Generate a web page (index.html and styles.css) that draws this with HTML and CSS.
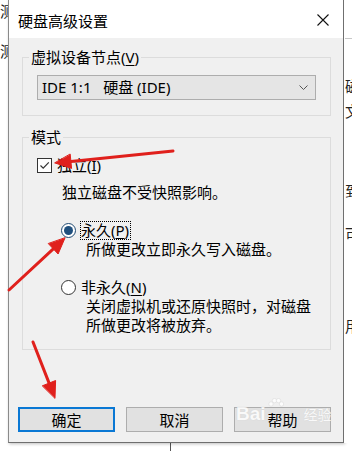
FILE: index.html
```html
<!DOCTYPE html>
<html lang="zh-CN">
<head>
<meta charset="utf-8">
<title>硬盘高级设置</title>
<link rel="stylesheet" href="styles.css">
</head>
<body>
<div class="screen">
  <div class="edge edge-left">
    <div class="bg-char bl1">测</div>
    <div class="bg-char bl2">测</div>
  </div>

  <div class="dialog">
    <div class="titlebar">
      <span class="title">硬盘高级设置</span>
      <svg class="close" width="12" height="12" viewBox="0 0 12 12"><path d="M0.5 0.5 L11.5 11.5 M11.5 0.5 L0.5 11.5" stroke="#111" stroke-width="1.1" fill="none"/></svg>
    </div>

    <div class="content">
      <fieldset class="group group-node">
        <legend>虚拟设备节点(<u>V</u>)</legend>
        <div class="group-inner node-inner">
          <div class="select">
            <span class="select-text">IDE 1:1&nbsp;&nbsp;&nbsp;硬盘 (IDE)</span>
            <svg class="chevron" width="9" height="5" viewBox="0 0 9 5"><path d="M0.5 0.5 L4.5 4.5 L8.5 0.5" stroke="#555" stroke-width="1" fill="none"/></svg>
          </div>
        </div>
      </fieldset>

      <fieldset class="group group-mode">
        <legend>模式</legend>
        <div class="group-inner mode-inner">
          <div class="row check-row">
            <span class="checkbox"><svg width="13" height="13" viewBox="0 0 13 13"><path d="M2.5 6.5 L5.2 9.2 L10.8 3.4" stroke="#333" stroke-width="1.2" fill="none"/></svg></span>
            <span class="opt-label">独立(<u>I</u>)</span>
          </div>
          <div class="desc desc-check">独立磁盘不受快照影响。</div>

          <div class="row radio-row radio-first">
            <span class="radio checked"><span class="dot"></span></span>
            <span class="opt-label radio-label focused">永久(<u>P</u>)</span>
          </div>
          <div class="desc desc-radio">所做更改立即永久写入磁盘。</div>

          <div class="row radio-row radio-second">
            <span class="radio"></span>
            <span class="opt-label radio-label">非永久(<u>N</u>)</span>
          </div>
          <div class="desc desc-radio">关闭虚拟机或还原快照时，对磁盘<br>所做更改将被放弃。</div>
        </div>
      </fieldset>

      <div class="buttons">
        <button class="btn btn-default">确定</button>
        <button class="btn">取消</button>
        <button class="btn btn-help">帮助</button>
      </div>
    </div>
  </div>

  <div class="edge edge-right">
    <div class="rule-line"></div>
    <div class="bg-char br1">磁</div>
    <div class="bg-char br2">文</div>
    <div class="bg-char br3">到</div>
    <div class="bg-char br4">可</div>
    <div class="bg-char br5">用</div>
  </div>
</div>
<div class="below"><div class="below-line"></div></div>

<div class="watermark">
  <span class="wm-bai">Bai</span>
  <svg class="wm-paw" width="16" height="14" viewBox="0 0 16 14"><g fill="#fff" stroke="#d8d8d8" stroke-width="0.6"><circle cx="3" cy="6" r="2.2"/><circle cx="6.5" cy="2.6" r="2.2"/><circle cx="10.5" cy="2.6" r="2.2"/><circle cx="13.5" cy="6" r="2.2"/></g></svg>
  <span class="wm-jy">经验</span>
</div>

<svg class="arrows" width="352" height="451" viewBox="0 0 352 451">
  <g fill="#e0201c" stroke="#e0201c" stroke-linecap="round">
    <line x1="173" y1="151" x2="70.9" y2="161.4" stroke-width="3"/>
    <polygon points="55,163 71.6,168.4 70.2,154.4" stroke-width="1"/>
    <line x1="9" y1="290" x2="53.3" y2="248.9" stroke-width="3"/>
    <polygon points="65,238 58.1,254 48.5,243.8" stroke-width="1"/>
    <line x1="33" y1="342" x2="49.1" y2="383.1" stroke-width="3"/>
    <polygon points="55,398 55.6,380.5 42.6,385.7" stroke-width="1"/>
  </g>
</svg>
</body>
</html>
```

FILE: styles.css
```css
* { box-sizing: border-box; }

html, body {
  margin: 0;
  padding: 0;
  background: #ffffff;
}

body {
  width: 352px;
  height: 451px;
  overflow: hidden;
  position: relative;
  font-family: "Noto Sans", "Noto Sans CJK SC", sans-serif;
  font-size: 15px;
  color: #000;
}

.screen {
  display: flex;
  height: 443px;
}

.edge {
  overflow: hidden;
  background: #fff;
  flex: none;
}

.edge-left { width: 8px; }
.edge-right { width: 8px; padding-left: 1px; }

.bg-char {
  line-height: 19px;
  height: 19px;
  white-space: nowrap;
  color: #222;
}

.bl1 { margin-top: 2px; }
.bl2 { margin-top: 21px; }

.rule-line {
  height: 1px;
  background: #c8c8c8;
  margin-top: 38px;
}

.br1 { margin-top: 38px; }
.br2 { margin-top: 6px; }
.br3 { margin-top: 61px; }
.br4 { margin-top: 24px; }
.br5 { margin-top: 73px; }

.dialog {
  width: 336px;
  flex: none;
  border-left: 1px solid #8a8a8a;
  border-right: 1px solid #6f6f6f;
  border-bottom: 1px solid #6f6f6f;
  background: #f0f0f0;
  display: flex;
  flex-direction: column;
  box-shadow: 1px 1px 3px rgba(0, 0, 0, 0.25);
}

.titlebar {
  height: 38px;
  background: #ffffff;
  display: flex;
  align-items: center;
  justify-content: space-between;
  padding: 2px 14px 0 9px;
}

.title {
  font-family: "Noto Sans CJK SC", sans-serif;
  font-size: 15px;
  line-height: 19px;
}

.close { display: block; }

.content {
  padding: 10px 0 10px 0;
}

.group {
  margin: 0 12px 0 13px;
  padding: 0;
  border: 1px solid #dcdcdc;
  min-width: 0;
}

.group legend {
  margin-left: 6px;
  padding: 0 2px;
  line-height: 19px;
  height: 19px;
}

u { text-decoration: underline; text-underline-offset: 2px; }

.node-inner { padding: 8px 0 15px 14px; }

.select {
  width: 279px;
  height: 25px;
  border: 1px solid #adadad;
  background: #e5e5e5;
  display: flex;
  align-items: center;
  justify-content: space-between;
  padding: 0 7px 0 4px;
}

.select-text {
  line-height: 19px;
  white-space: nowrap;
}

.chevron { display: block; }

.group-mode { margin-top: 12px; }

.mode-inner { padding: 9px 0 14px 14px; }

.row {
  display: flex;
  align-items: center;
  height: 19px;
}

.opt-label {
  line-height: 19px;
  white-space: nowrap;
}

.checkbox {
  width: 15px;
  height: 15px;
  border: 1px solid #333;
  background: #fff;
  display: flex;
  align-items: center;
  justify-content: center;
  margin-right: 5px;
}

.checkbox svg { display: block; }

.desc {
  line-height: 19px;
  white-space: nowrap;
}

.desc-check { margin-top: 8px; margin-left: 25px; }
.desc-radio { margin-left: 49px; }

.radio-row { padding-left: 24px; }
.radio-first { margin-top: 19px; }
.radio-second { margin-top: 19px; }

.radio {
  width: 15px;
  height: 15px;
  border-radius: 50%;
  border: 1px solid #333;
  background: #fff;
  display: flex;
  align-items: center;
  justify-content: center;
  margin-right: 4px;
  flex: none;
}

.radio.checked { border-color: #1f4a72; }

.dot {
  width: 9px;
  height: 9px;
  border-radius: 50%;
  background: #1f4f7d;
}

.radio-label {
  border: 1px dotted transparent;
  line-height: 17px;
  padding-right: 1px;
}

.radio-label.focused { border-color: #000; }

.buttons {
  display: flex;
  gap: 11px;
  padding-left: 9px;
  margin-top: 57px;
}

.btn {
  width: 97px;
  height: 25px;
  border: 1px solid #adadad;
  background: #e1e1e1;
  font-family: "Noto Sans CJK SC", sans-serif;
  font-size: 15px;
  color: #000;
  padding: 0;
  line-height: 19px;
}

.btn-default {
  border: 2px solid #0a78d4;
}

.below {
  height: 8px;
  background: #fff;
}

.below-line {
  width: 1px;
  height: 8px;
  margin-left: 170px;
  background: #555;
}

.watermark {
  position: absolute;
  left: 236px;
  top: 403px;
  display: flex;
  align-items: center;
  pointer-events: none;
  opacity: 0.8;
}

.wm-bai {
  font-family: "Liberation Sans", sans-serif;
  font-weight: bold;
  font-size: 19px;
  line-height: 22px;
  color: #ffffff;
  text-shadow: 0 0 1px #c8c8c8;
}

.wm-paw {
  display: block;
  margin: -18px 0 0 2px;
}

.wm-jy {
  font-family: "Noto Sans CJK SC", sans-serif;
  font-size: 14px;
  line-height: 22px;
  color: #ffffff;
  text-shadow: 0 0 1px #c8c8c8;
  margin-left: 20px;
}

.arrows {
  position: absolute;
  left: 0;
  top: 0;
  pointer-events: none;
}
```
